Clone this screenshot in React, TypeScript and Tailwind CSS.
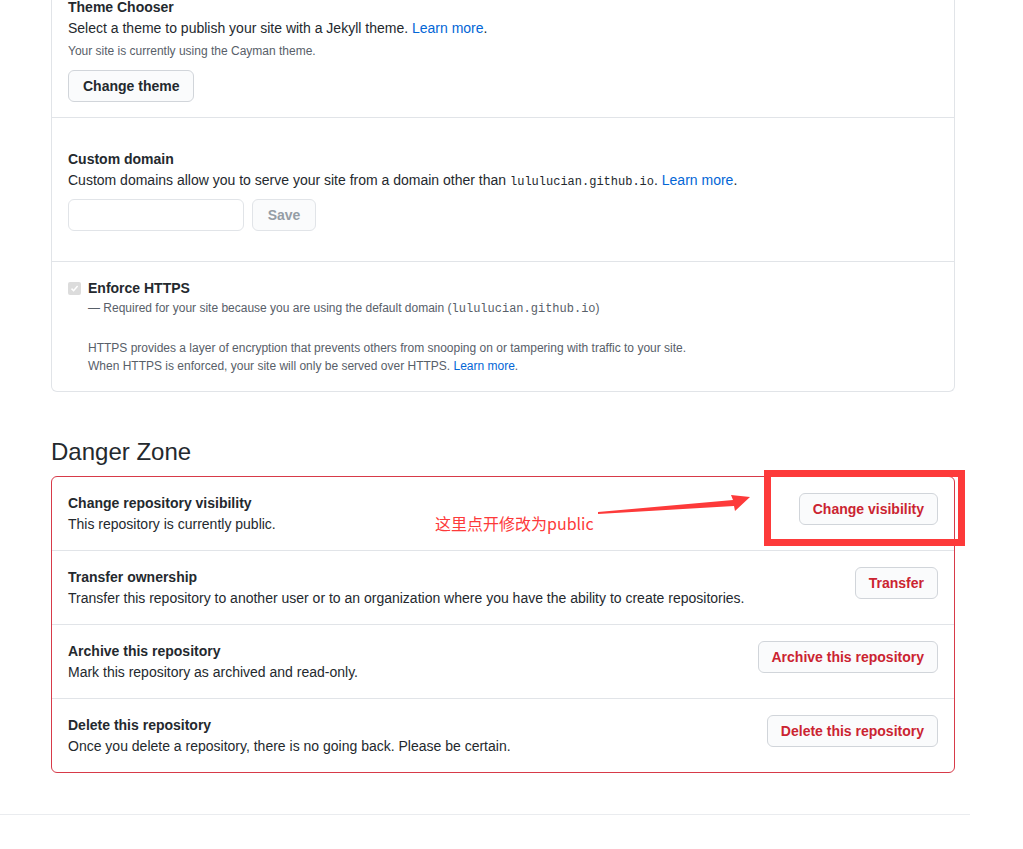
import React from 'react';

const DangerRow = ({ title, desc, action, last }: { title: string; desc: string; action: string; last?: boolean }) => (
  <div className={`flex items-start justify-between px-4 pt-4 pb-[15px] ${last ? '' : 'border-b border-[#e1e4e8]'}`}>
    <div>
      <div className="text-[14px] leading-[21px] font-semibold text-[#24292e]">{title}</div>
      <div className="text-[14px] leading-[21px] text-[#24292e]">{desc}</div>
    </div>
    <button className="h-8 px-[13px] rounded-md border border-[#d1d5da] bg-[#fafbfc] text-[14px] font-semibold text-[#cb2431]">
      {action}
    </button>
  </div>
);

const Mono = ({ children }: { children: React.ReactNode }) => (
  <code className="text-[12px] leading-none font-['Liberation_Mono','DejaVu_Sans_Mono',monospace]">{children}</code>
);

export default function App() {
  return (
    <div className="relative w-full h-[849px] overflow-hidden bg-white font-['Liberation_Sans','Noto_Sans_CJK_SC',sans-serif] text-[#24292e]">
      <div className="ml-[51px] w-[904px] -mt-[19px]">
        {/* GitHub Pages box (top cut off) */}
        <div className="border border-t-0 border-[#e1e4e8] rounded-b-md">
          <div className="px-4 pt-[16px] pb-[15px] border-b border-[#e1e4e8]">
            <div className="text-[14px] leading-[21px] font-semibold">Theme Chooser</div>
            <div className="text-[14px] leading-[21px]">
              Select a theme to publish your site with a Jekyll theme. <a className="text-[#0366d6]">Learn more</a>.
            </div>
            <div className="text-[12px] leading-[18px] mt-[3px] text-[#586069]">Your site is currently using the Cayman theme.</div>
            <button className="mt-[10px] h-8 px-[14px] rounded-md border border-[#d1d5da] bg-[#fafbfc] text-[14px] font-semibold">
              Change theme
            </button>
          </div>
          <div className="px-4 pt-[31px] pb-[30px] border-b border-[#e1e4e8]">
            <div className="text-[14px] leading-[21px] font-semibold">Custom domain</div>
            <div className="text-[14px] leading-[21px]">
              Custom domains allow you to serve your site from a domain other than <Mono>lululucian.github.io</Mono>.{' '}
              <a className="text-[#0366d6]">Learn more</a>.
            </div>
            <div className="mt-[8px] flex gap-2">
              <input className="w-[176px] h-8 rounded-md border border-[#e1e4e8] bg-white" />
              <button className="h-8 w-[64px] rounded-md border border-[#e1e4e8] bg-[#fafbfc] text-[14px] font-semibold text-[#959da5]">
                Save
              </button>
            </div>
          </div>
          <div className="px-4 pt-4 pb-4">
            <div className="flex items-center gap-[7px]">
              <span className="w-[13px] h-[13px] rounded-[2px] bg-[#dcdcdc] flex items-center justify-center">
                <svg width="9" height="9" viewBox="0 0 9 9">
                  <path d="M1.5 4.6 L3.6 6.7 L7.6 2" stroke="#fff" strokeWidth="1.5" fill="none" />
                </svg>
              </span>
              <span className="text-[14px] leading-[21px] font-semibold">Enforce HTTPS</span>
            </div>
            <div className="pl-[20px] text-[12px] leading-[18px] text-[#586069]">
              — Required for your site because you are using the default domain (<Mono>lululucian.github.io</Mono>)
            </div>
            <div className="pl-[20px] mt-[22px] text-[12px] leading-[18px] text-[#586069]">
              <div>HTTPS provides a layer of encryption that prevents others from snooping on or tampering with traffic to your site.</div>
              <div>
                When HTTPS is enforced, your site will only be served over HTTPS. <a className="text-[#0366d6]">Learn more</a>.
              </div>
            </div>
          </div>
        </div>

        {/* Danger Zone */}
        <h2 className="mt-[45px] text-[24px] leading-[30px] font-normal">Danger Zone</h2>
        <div className="relative mt-[9px]">
          <div className="border border-[#d73a49] rounded-md">
            <DangerRow title="Change repository visibility" desc="This repository is currently public." action="Change visibility" />
            <DangerRow
              title="Transfer ownership"
              desc="Transfer this repository to another user or to an organization where you have the ability to create repositories."
              action="Transfer"
            />
            <DangerRow title="Archive this repository" desc="Mark this repository as archived and read-only." action="Archive this repository" />
            <DangerRow
              title="Delete this repository"
              desc="Once you delete a repository, there is no going back. Please be certain."
              action="Delete this repository"
              last
            />
          </div>

          {/* annotation overlay */}
          <div className="absolute left-[713px] top-[-6px] w-[201px] h-[76px] border-[7px] border-[#fd3a3a]" />
          <svg className="absolute left-[540px] top-[14px]" width="160" height="30" viewBox="0 0 160 30">
            <polygon points="7,22 142,10 140,5 159,7 144,21 143,16 7,24" fill="#fd3a3a" />
          </svg>
          <div className="absolute left-[384px] top-[36px] text-[16px] leading-[22px] text-[#fd3a3a] font-['Noto_Sans_CJK_SC',sans-serif]">
            这里点开修改为public
          </div>
        </div>
      </div>

      <div className="mt-[41px] w-[970px] border-t border-[#eaecef]" />
    </div>
  );
}
